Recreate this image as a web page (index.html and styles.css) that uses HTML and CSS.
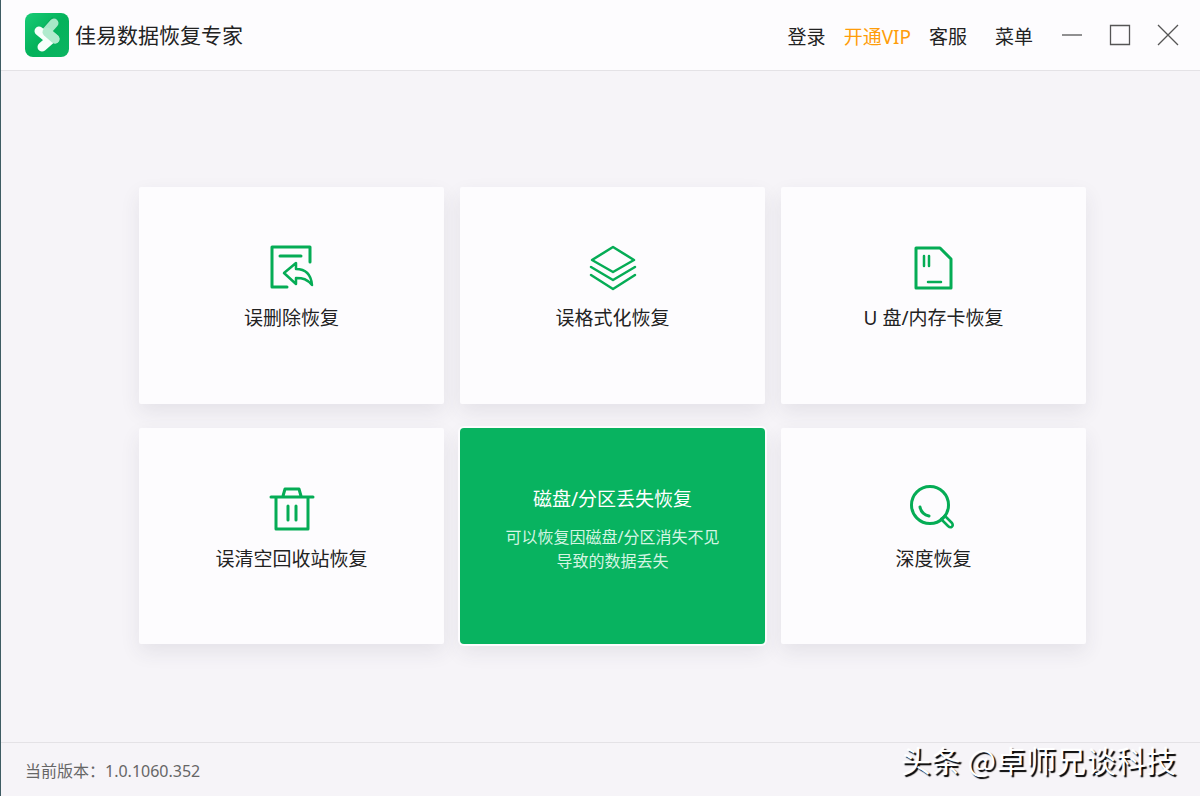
FILE: index.html
```html
<!DOCTYPE html>
<html lang="zh-CN">
<head>
    <meta charset="UTF-8">
    <meta name="viewport" content="width=device-width, initial-scale=1.0">
    <title>佳易数据恢复专家</title>
    <link rel="stylesheet" href="styles.css">
</head>
<body>
    <header class="titlebar">
        <div class="brand">
            <svg class="logo" viewBox="0 0 44 44" aria-hidden="true">
                <defs>
                    <linearGradient id="logoBg" x1="0" y1="0" x2="1" y2="1">
                        <stop offset="0" stop-color="#18cc76"/>
                        <stop offset="0.5" stop-color="#04b25b"/>
                        <stop offset="1" stop-color="#0bb461"/>
                    </linearGradient>
                </defs>
                <rect width="44" height="44" rx="8" fill="url(#logoBg)"/>
                <path d="M16 17L27 4L34 8L22 22Z" fill="#079c52" opacity="0.5"/>
                <g fill="none" stroke-linecap="round" stroke-linejoin="round" stroke-width="9">
                    <path d="M29 10L21 19L30 26" stroke="#a5e8c7"/>
                    <path d="M14 18L25 27L17 34" stroke="#f7fffb"/>
                    <path d="M22 19L30 26" stroke="#b0ebcd"/>
                </g>
            </svg>
            <h1 class="app-name">佳易数据恢复专家</h1>
        </div>
        <nav class="top-menu">
            <a class="menu-link" href="#">登录</a>
            <a class="menu-link vip" href="#">开通VIP</a>
            <a class="menu-link" href="#">客服</a>
            <button class="menu-link menu-button" type="button">菜单</button>
            <div class="window-buttons">
                <button class="window-button" type="button" aria-label="最小化">
                    <svg viewBox="0 0 22 22"><path d="M1 11H21"/></svg>
                </button>
                <button class="window-button" type="button" aria-label="最大化">
                    <svg viewBox="0 0 22 22"><path d="M1.5 1.5H20.5V20.5H1.5Z"/></svg>
                </button>
                <button class="window-button" type="button" aria-label="关闭">
                    <svg viewBox="0 0 22 22"><path d="M1 1L21 21M21 1L1 21"/></svg>
                </button>
            </div>
        </nav>
    </header>

    <main class="cards">
        <button class="card" type="button">
            <svg class="card-icon" viewBox="0 0 48 48" aria-hidden="true">
                <path d="M19 43H4V3H42V18M12 12H33"/>
                <path d="M16 29L28 19V25C37 25 43 30 44 41C39 35 35 34 28 34V40Z" stroke-width="2.5"/>
            </svg>
            <span class="card-label">误删除恢复</span>
        </button>
        <button class="card" type="button">
            <svg class="card-icon" viewBox="0 0 48 48" aria-hidden="true">
                <path d="M24 3L45 16L24 28L3 16Z" stroke-width="2.5"/>
                <path d="M2 23L24 36L46 23M2 31L24 45L46 31" stroke-width="2.5"/>
            </svg>
            <span class="card-label">误格式化恢复</span>
        </button>
        <button class="card" type="button">
            <svg class="card-icon" viewBox="0 0 48 48" aria-hidden="true">
                <path d="M6 4H30L41 15V44H6Z"/>
                <path d="M14 12V22M19 12V22M18 38H31" stroke-width="2.5"/>
            </svg>
            <span class="card-label">U 盘/内存卡恢复</span>
        </button>
        <button class="card" type="button">
            <svg class="card-icon" viewBox="0 0 48 48" aria-hidden="true">
                <path d="M3 12H45M8 12V44H40V12M15 11L17 4H31L33 11"/>
                <path d="M20 21V35M28 21V35"/>
            </svg>
            <span class="card-label">误清空回收站恢复</span>
        </button>
        <button class="card active" type="button">
            <span class="card-label">磁盘/分区丢失恢复</span>
            <span class="card-desc">可以恢复因磁盘/分区消失不见<br>导致的数据丢失</span>
        </button>
        <button class="card" type="button">
            <svg class="card-icon" viewBox="0 0 48 48" aria-hidden="true">
                <circle cx="20" cy="20" r="18.5"/>
                <path d="M10 22C11 27 14 30 19 31"/>
                <path d="M31 34L35 31L42 38C44 41 41 44 38 41Z" stroke-width="2.5"/>
            </svg>
            <span class="card-label">深度恢复</span>
        </button>
    </main>

    <footer class="statusbar">
        <span class="version">当前版本：1.0.1060.352</span>
        <span class="signature">头条 @卓师兄谈科技</span>
    </footer>
</body>
</html>
```

FILE: styles.css
```css
* {
    box-sizing: border-box;
}
body {
    margin: 0;
    min-height: 100vh;
    display: flex;
    flex-direction: column;
    font-family: "Noto Sans", "Noto Sans CJK SC", sans-serif;
    color: #222;
    background-color: #f6f4f8;
    border-left: 1px solid #3e5c63;
}
button {
    font: inherit;
    color: inherit;
    border: none;
    padding: 0;
    background: none;
    cursor: pointer;
}

/* Title bar */
.titlebar {
    height: 71px;
    display: flex;
    align-items: center;
    justify-content: space-between;
    padding: 0 21px 0 24px;
    background-color: #fdfcfe;
    border-bottom: 1px solid #e4e2e6;
}
.brand {
    display: flex;
    align-items: center;
    gap: 6px;
}
.logo {
    width: 44px;
    height: 44px;
}
.app-name {
    margin: 0;
    font-size: 21px;
    line-height: 30px;
    font-weight: 400;
}
.top-menu {
    display: flex;
    align-items: center;
}
.menu-link {
    margin-right: 18px;
    padding-top: 3px;
    font-size: 19px;
    line-height: 28px;
    color: #222;
    text-decoration: none;
}
.menu-link.vip {
    color: #ff9d0a;
}
.menu-button {
    margin: 0 28px 0 10px;
}
.window-buttons {
    display: flex;
    gap: 26px;
}
.window-button {
    width: 22px;
    height: 22px;
}
.window-button svg {
    display: block;
    fill: none;
    stroke: #555;
    stroke-width: 1.3;
}

/* Recovery modes */
.cards {
    flex: 1;
    display: grid;
    grid-template-columns: repeat(3, 1fr);
    grid-auto-rows: 1fr;
    gap: 24px 16px;
    padding: 116px 114px 98px 138px;
}
.card {
    display: flex;
    flex-direction: column;
    align-items: center;
    justify-content: center;
    gap: 12px;
    padding-bottom: 14px;
    background-color: #fdfcfe;
    border-radius: 2px;
    box-shadow: 0 8px 20px rgba(60, 50, 80, 0.09);
}
.card-icon {
    width: 48px;
    height: 48px;
    fill: none;
    stroke: #05ac55;
    stroke-width: 3;
    stroke-linecap: round;
    stroke-linejoin: round;
}
.card-label {
    font-size: 19px;
    line-height: 28px;
}
.card.active {
    color: #fff;
    background-color: #08b360;
    border-radius: 4px;
    box-shadow: 0 0 0 2px #fdfcfe, 0 8px 20px rgba(60, 50, 80, 0.09);
}
.card-desc {
    font-size: 16px;
    line-height: 24px;
    color: #d5f5e3;
}

/* Status bar */
.statusbar {
    height: 54px;
    display: flex;
    align-items: center;
    justify-content: space-between;
    padding: 0 24px;
    border-top: 1px solid #e4e2e6;
}
.version {
    padding-top: 3px;
    font-size: 16px;
    line-height: 24px;
    color: #666;
}
.signature {
    padding-bottom: 22px;
    font-family: "Noto Sans CJK SC", sans-serif;
    font-size: 30px;
    line-height: 36px;
    color: #fff;
    text-shadow: 2px 2px 1px #000;
}
```
